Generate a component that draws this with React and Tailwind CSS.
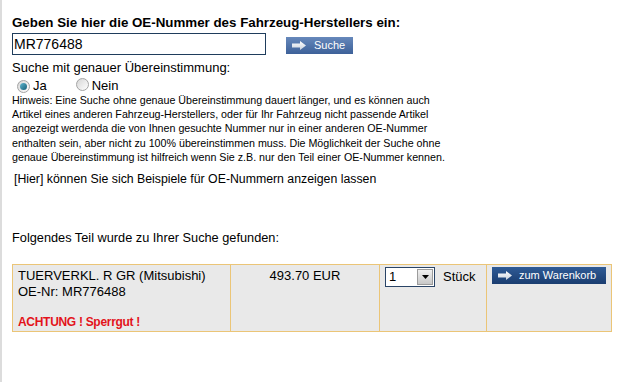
import React from "react";

function Arrow() {
  return (
    <svg width="14" height="9" viewBox="0 0 14 9" className="shrink-0">
      <defs>
        <linearGradient id="ag" x1="0" y1="0" x2="0" y2="1">
          <stop offset="0" stopColor="#ffffff" />
          <stop offset="1" stopColor="#c9d2de" />
        </linearGradient>
      </defs>
      <polygon points="0,2.5 8,2.5 8,0 14,4.5 8,9 8,6.5 0,6.5" fill="url(#ag)" />
    </svg>
  );
}

function Radio({ checked }) {
  return (
    <span className="relative inline-flex w-[13px] h-[13px] rounded-full border border-[#a4a4a4] bg-gradient-to-br from-[#d6d6d6] to-[#ffffff] items-center justify-center">
      {checked && (
        <span className="w-[7px] h-[7px] rounded-full bg-gradient-to-br from-[#5fb7d0] to-[#155f78]" />
      )}
    </span>
  );
}

export default function App() {
  return (
    <div
      className="w-[643px] h-[382px] bg-white border-l-2 border-[#dcdcdc] pl-[10px] pt-[15px] text-black overflow-hidden"
      style={{ fontFamily: '"Liberation Sans", Arial, sans-serif' }}
    >
      <div className="text-[13.33px] font-bold leading-[16px] whitespace-nowrap">
        Geben Sie hier die OE-Nummer des Fahrzeug-Herstellers ein:
      </div>

      <div className="flex items-start mt-[2px]">
        <div className="w-[254px] h-[22px] border border-[#1f3d5c] flex items-center pl-[1px] text-[14px]">
          MR776488
        </div>
        <div className="ml-[20px] mt-[4px] w-[67px] h-[17px] bg-gradient-to-b from-[#6688bb] to-[#3d6199] flex items-center pl-[6px] gap-[8px] text-white text-[11px]">
          <Arrow />
          <span>Suche</span>
        </div>
      </div>

      <div className="mt-[5px] text-[13px] leading-[15px]">Suche mit genauer Übereinstimmung:</div>

      <div className="mt-[4px] h-[13px] flex items-center text-[13px] leading-[15px]">
        <span className="ml-[5px]"><Radio checked /></span>
        <span className="ml-[3px]">Ja</span>
        <span className="ml-[29px]"><Radio /></span>
        <span className="ml-[3px]">Nein</span>
      </div>

      <div className="mt-[1px] text-[10.7px] leading-[14.2px] whitespace-nowrap">
        Hinweis: Eine Suche ohne genaue Übereinstimmung dauert länger, und es können auch
        <br />
        Artikel eines anderen Fahrzeug-Herstellers, oder für Ihr Fahrzeug nicht passende Artikel
        <br />
        angezeigt werdenda die von Ihnen gesuchte Nummer nur in einer anderen OE-Nummer
        <br />
        enthalten sein, aber nicht zu 100% übereinstimmen muss. Die Möglichkeit der Suche ohne
        <br />
        genaue Übereinstimmung ist hilfreich wenn Sie z.B. nur den Teil einer OE-Nummer kennen.
      </div>

      <div className="mt-[8px] pl-[2px] text-[12.3px] leading-[15px]">
        [Hier] können Sie sich Beispiele für OE-Nummern anzeigen lassen
      </div>

      <div className="mt-[43px] text-[12.75px] leading-[15px]">Folgendes Teil wurde zu Ihrer Suche gefunden:</div>

      <div className="mt-[19px] w-[600px] h-[68px] flex border border-[#ebc577] bg-[#e9e9e9] text-[13px] leading-[15.7px]">
        <div className="w-[218px] pl-[5px] pt-[3px] border-r border-[#ebc577]">
          <div>TUERVERKL. R GR (Mitsubishi)</div>
          <div>OE-Nr: MR776488</div>
          <div>&nbsp;</div>
          <div className="text-[#e3131b] font-bold text-[12px] tracking-[-0.3px]">ACHTUNG ! Sperrgut !</div>
        </div>
        <div className="w-[149px] pt-[3px] text-center border-r border-[#ebc577]">493.70 EUR</div>
        <div className="w-[107px] pl-[5px] pt-[2px] border-r border-[#ebc577] flex items-start">
          <div className="w-[50px] h-[20px] bg-white border border-[#2a4466] flex items-center">
            <span className="pl-[3px] flex-1">1</span>
            <span className="w-[16px] h-[16px] mr-[1px] bg-gradient-to-b from-[#f0f0f0] to-[#c8c8c8] border border-[#9c9c9c] flex items-center justify-center">
              <svg width="7" height="4" viewBox="0 0 7 4"><polygon points="0,0 7,0 3.5,4" fill="#000" /></svg>
            </span>
          </div>
          <span className="ml-[8px] mt-[2px]">Stück</span>
        </div>
        <div className="flex-1 pl-[5px] pt-[2px]">
          <div className="w-[114px] h-[17px] bg-gradient-to-b from-[#2f5b96] to-[#1a3d70] flex items-center pl-[6px] gap-[7px] text-white text-[11px]">
            <Arrow />
            <span>zum Warenkorb</span>
          </div>
        </div>
      </div>
    </div>
  );
}
